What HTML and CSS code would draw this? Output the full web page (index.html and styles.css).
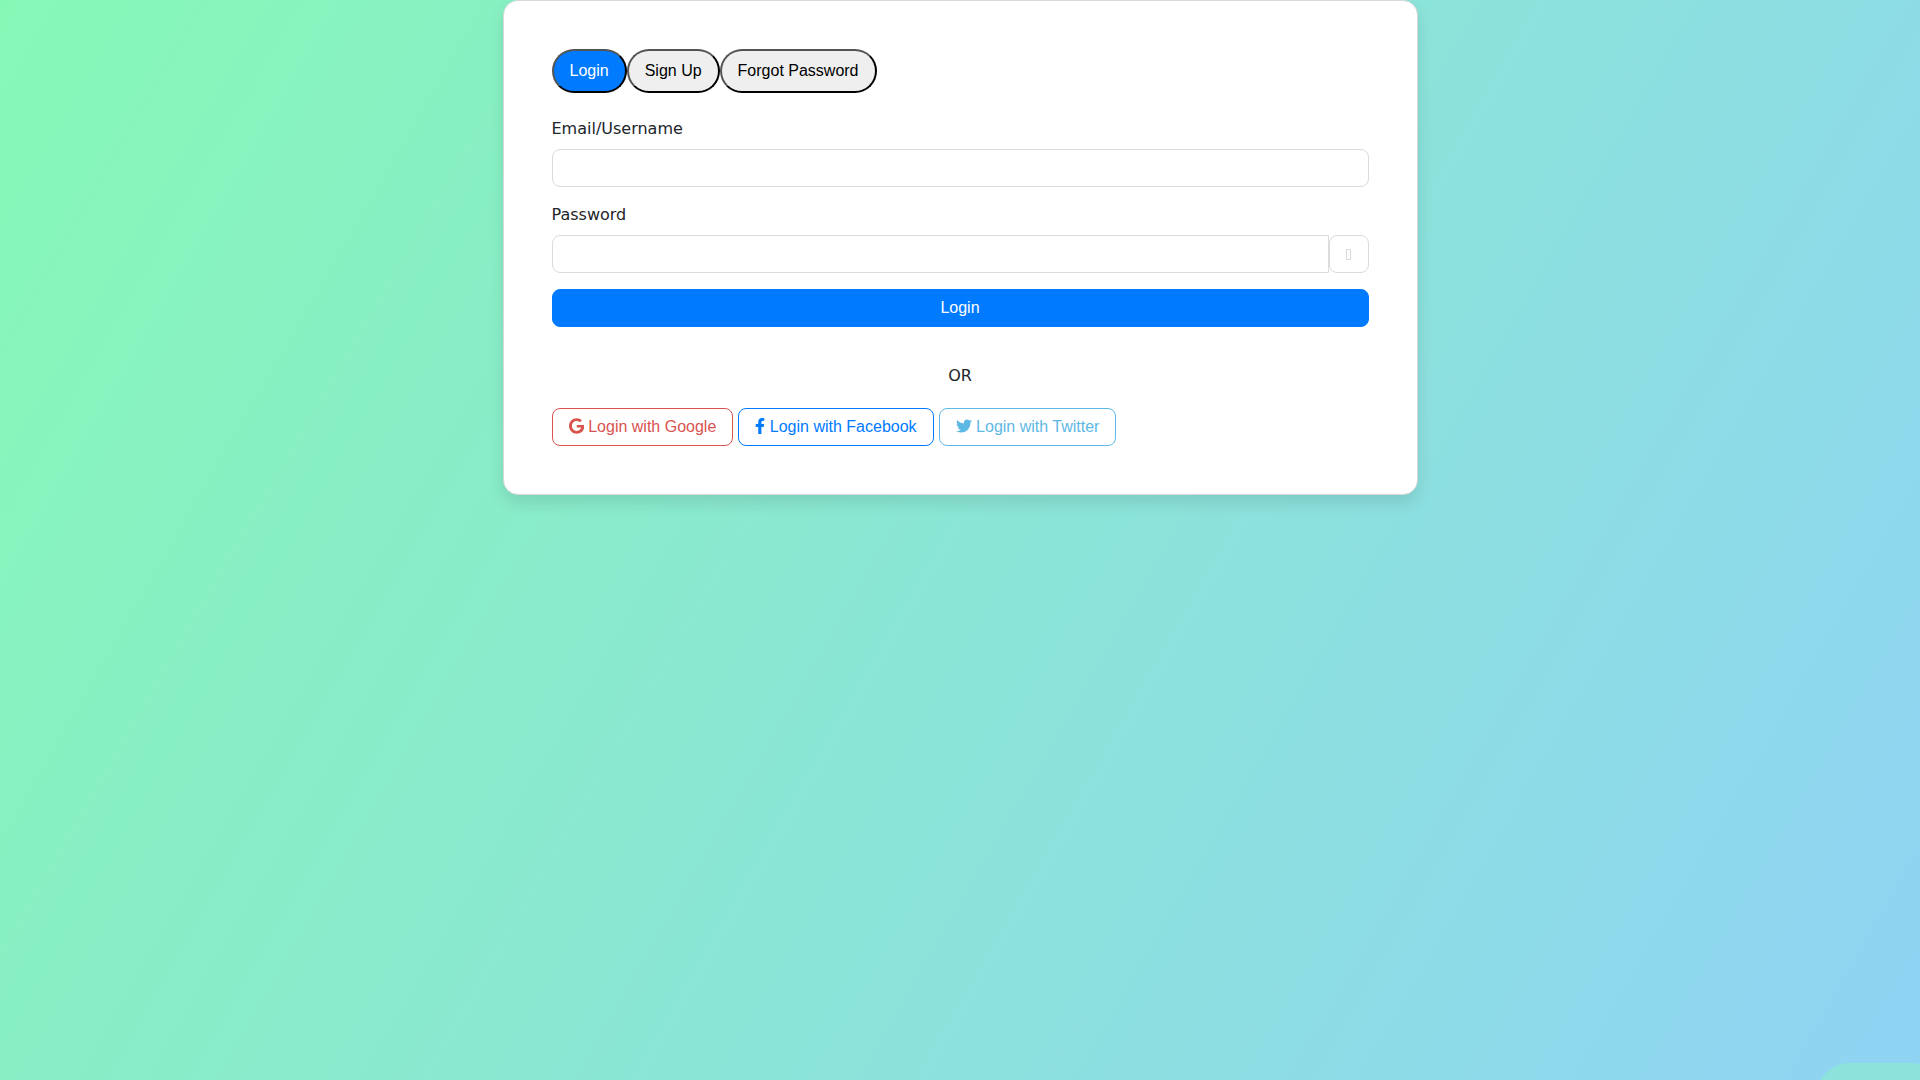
FILE: index.html
```html
<!DOCTYPE html>
<html lang="en">
<head>
    <meta charset="UTF-8">
    <meta name="viewport" content="width=device-width, initial-scale=1.0">
    <title>Login</title>
    <link rel="stylesheet" href="styles.css">
</head>
<body>
    <main class="card">
        <div class="tabs">
            <button type="button" class="tab active">Login</button>
            <button type="button" class="tab">Sign Up</button>
            <button type="button" class="tab">Forgot Password</button>
        </div>

        <form class="login-form">
            <div class="field">
                <label for="login-email">Email/Username</label>
                <input type="text" id="login-email" class="form-control" required>
            </div>
            <div class="field">
                <label for="login-password">Password</label>
                <div class="input-group">
                    <input type="password" id="login-password" class="form-control" required>
                    <button type="button" class="btn toggle-password" aria-label="Show password">
                        <svg width="6" height="11" viewBox="0 0 6 11" aria-hidden="true">
                            <rect x="0.5" y="0.5" width="4" height="10" fill="none" stroke="currentColor"/>
                        </svg>
                    </button>
                </div>
            </div>
            <button type="submit" class="btn btn-primary">Login</button>
        </form>

        <p class="divider">OR</p>

        <div class="social">
            <button type="button" class="btn btn-google">
                <svg class="icon" viewBox="0 0 488 512" aria-hidden="true"><path d="M488 261.8C488 403.3 391.1 504 248 504 110.8 504 0 393.2 0 256S110.8 8 248 8c66.8 0 123 24.5 166.3 64.9l-67.5 64.9C258.5 52.6 94.3 116.6 94.3 256c0 86.5 69.1 156.6 153.7 156.6 98.2 0 135-70.4 140.8-106.9H248v-85.3h236.1c2.3 12.7 3.9 24.9 3.9 41.4z"/></svg>
                Login with Google
            </button>
            <button type="button" class="btn btn-facebook">
                <svg class="icon" viewBox="0 0 320 512" aria-hidden="true"><path d="M279.14 288l14.22-92.66h-88.91v-60.13c0-25.35 12.42-50.06 52.24-50.06h40.42V6.26S260.43 0 225.36 0c-73.22 0-121.08 44.38-121.08 124.72v70.62H22.89V288h81.39v224h100.17V288z"/></svg>
                Login with Facebook
            </button>
            <button type="button" class="btn btn-twitter">
                <svg class="icon" viewBox="0 0 512 512" aria-hidden="true"><path d="M459.37 151.716c.325 4.548.325 9.097.325 13.645 0 138.72-105.583 298.558-298.558 298.558-59.452 0-114.68-17.219-161.137-47.106 8.447.974 16.568 1.299 25.34 1.299 49.055 0 94.213-16.568 130.274-44.832-46.132-.975-84.792-31.188-98.112-72.772 6.498.974 12.995 1.624 19.818 1.624 9.421 0 18.843-1.3 27.614-3.573-48.081-9.747-84.143-51.98-84.143-102.985v-1.299c13.969 7.797 30.214 12.67 47.431 13.319-28.264-18.843-46.781-51.005-46.781-87.391 0-19.492 5.197-37.36 14.294-52.954 51.655 63.675 129.3 105.258 216.365 109.807-1.624-7.797-2.599-15.918-2.599-24.04 0-57.828 46.782-104.934 104.934-104.934 30.213 0 57.502 12.67 76.67 33.137 23.715-4.548 46.456-13.32 66.599-25.34-7.798 24.366-24.366 44.833-46.132 57.827 21.117-2.273 41.584-8.122 60.426-16.243-14.292 20.791-32.161 39.308-52.628 54.253z"/></svg>
                Login with Twitter
            </button>
        </div>
    </main>

    <div class="corner-blob"></div>
</body>
</html>
```
FILE: styles.css
```css
* {
    box-sizing: border-box;
}
body {
    margin: 0;
    min-height: 100vh;
    font-family: "DejaVu Sans", sans-serif;
    font-size: 16px;
    line-height: 24px;
    color: #212529;
    background: linear-gradient(120deg, #86f8b6 0%, #8fd3f4 100%);
}
button,
input {
    font-family: "Liberation Sans", Arial, sans-serif;
    font-size: 16px;
    line-height: 24px;
}
.card {
    max-width: 915px;
    margin: 0 auto;
    padding: 48px;
    background-color: #fff;
    border: 1px solid #d6d8da;
    border-radius: 15px;
    box-shadow: 0 8px 16px rgba(0, 0, 0, 0.1);
}

/* Tabs */
.tabs {
    display: flex;
    flex-wrap: wrap;
    margin-bottom: 24px;
}
.tab {
    padding: 8px 16px;
    color: #000;
    background-color: #efefef;
    border: 2px outset #000;
    border-radius: 25px;
    cursor: pointer;
}
.tab.active {
    color: #fff;
    background-color: #007bff;
}

/* Form */
.field {
    margin-bottom: 16px;
}
.field label {
    display: block;
    margin-bottom: 8px;
}
.form-control {
    display: block;
    width: 100%;
    padding: 6px 12px;
    background-color: #fff;
    border: 1px solid #d9dbdd;
    border-radius: 8px;
}
.input-group {
    display: flex;
}
.input-group .form-control {
    flex: 1;
    border-top-right-radius: 0;
    border-bottom-right-radius: 0;
}
.btn {
    padding: 6px 16px;
    background-color: #fff;
    border: 1px solid currentColor;
    border-radius: 8px;
    cursor: pointer;
}
.toggle-password {
    display: flex;
    align-items: center;
    color: #d9dbdd;
}
.btn-primary {
    width: 100%;
    color: #fff;
    background-color: #007bff;
    border-color: #007bff;
}
.divider {
    margin: 37px 0 20px;
    text-align: center;
}

/* Social logins */
.btn-google {
    color: #d9534f;
}
.btn-facebook {
    color: #007bff;
}
.btn-twitter {
    color: #5eb8e4;
}
.icon {
    height: 16px;
    fill: currentColor;
    vertical-align: -2px;
}

/* Rounded shape peeking in at the bottom right corner */
.corner-blob {
    position: fixed;
    right: -24px;
    bottom: -47px;
    width: 127px;
    height: 64px;
    background-color: #8be3db;
    border-radius: 32px;
}
```
